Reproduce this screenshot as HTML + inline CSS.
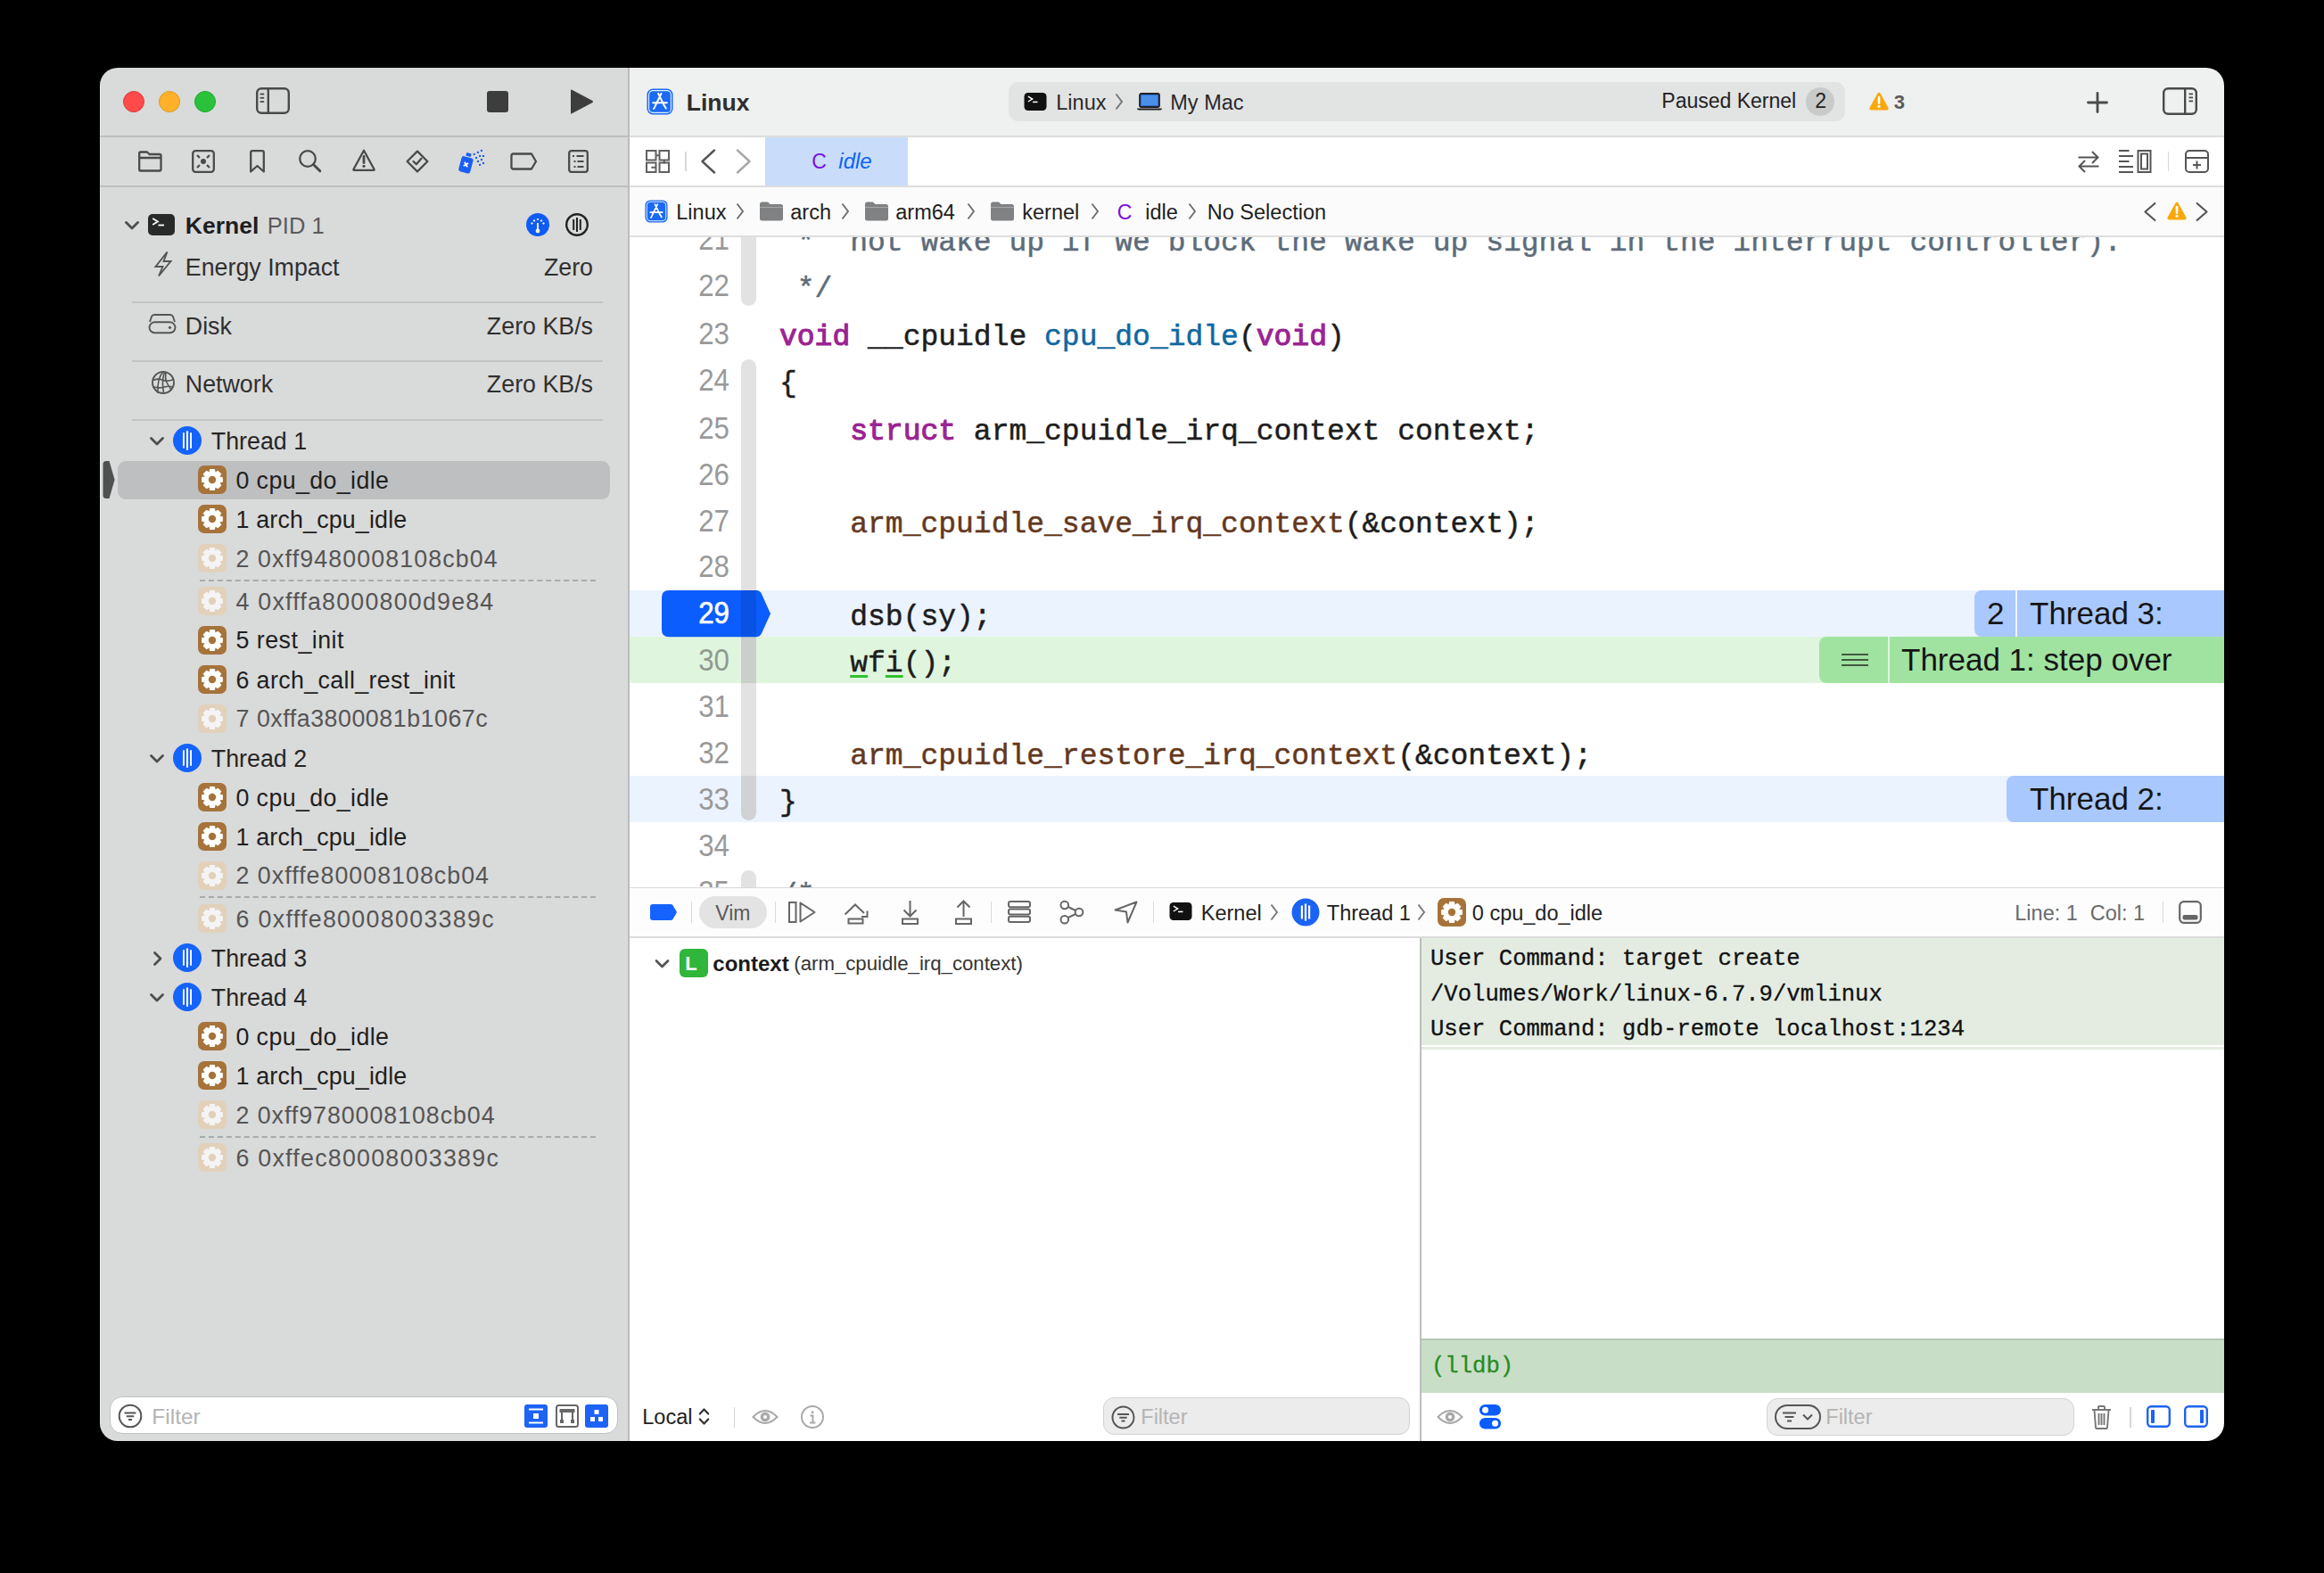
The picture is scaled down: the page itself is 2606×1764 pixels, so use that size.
<!DOCTYPE html>
<html><head><meta charset="utf-8">
<style>
html,body{margin:0;padding:0}
body{width:2606px;height:1764px;background:#000;position:relative;overflow:hidden;font-family:"Liberation Sans",sans-serif}
#win{position:absolute;left:0;top:0;width:2606px;height:1764px;clip-path:inset(76px 112px 148px 112px round 20px)}
.a{position:absolute}
.t{position:absolute;white-space:pre;line-height:44px;height:44px}
.m{font-family:"Liberation Mono",monospace}
svg{position:absolute;overflow:visible}
.code{position:absolute;left:874px;white-space:pre;font-family:"Liberation Mono",monospace;font-size:33px;line-height:52px;height:52px;color:#1d1d1d;-webkit-text-stroke:0.5px currentColor}
.ln{position:absolute;left:740px;width:78px;text-align:right;font-size:35.5px;line-height:52px;height:52px;color:#999999;transform:scaleX(0.88);transform-origin:100% 50%}
.kw{color:#9b2393;-webkit-text-stroke:1.1px #9b2393}
.fn{color:#643820}
.dc{color:#0f68a0}
.cm{color:#5d6c79}
.side{font-size:26.8px;color:#262626}
.fr{font-size:26.8px;color:#1f1f1f}
.fa{color:#555}
.bc{font-size:23px;color:#1f1f1f;line-height:44px;height:44px}
.chev{color:#7a7a7a}
</style></head><body>
<div id="win">
<!-- sidebar -->
<div class="a" style="left:112px;top:76px;width:592px;height:1540px;background:#d9dada"></div>
<div class="a" style="left:704px;top:76px;width:2px;height:1540px;background:#bcbcbc"></div>
<div class="a" style="left:112px;top:152px;width:592px;height:2px;background:#bdbebe"></div>
<div class="a" style="left:112px;top:208px;width:592px;height:2px;background:#bdbebe"></div>
<!-- editor title bar -->
<div class="a" style="left:706px;top:76px;width:1788px;height:76px;background:#eff0f0"></div>
<div class="a" style="left:706px;top:152px;width:1788px;height:2px;background:#dcdddd"></div>
<!-- tab bar -->
<div class="a" style="left:706px;top:154px;width:1788px;height:54px;background:#fff"></div>
<div class="a" style="left:858px;top:154px;width:160px;height:54px;background:#c9dcfa"></div>
<div class="a" style="left:706px;top:208px;width:1788px;height:2px;background:#dedede"></div>
<!-- breadcrumb -->
<div class="a" style="left:706px;top:210px;width:1788px;height:54px;background:#fbfbfb"></div>
<div class="a" style="left:706px;top:264px;width:1788px;height:2px;background:#dedede"></div>
<!-- code area -->
<!-- debug bar -->
<div class="a" style="left:706px;top:994px;width:1788px;height:2px;background:#d9d9d9"></div>
<div class="a" style="left:706px;top:996px;width:1788px;height:54px;background:#fdfdfd"></div>
<div class="a" style="left:706px;top:1050px;width:1788px;height:2px;background:#dcdcdc"></div>
<!-- variables -->
<div class="a" style="left:706px;top:1052px;width:886px;height:564px;background:#fff"></div>
<!-- console -->
<div class="a" style="left:1592px;top:1052px;width:2px;height:564px;background:#bdbdbd"></div>
<div class="a" style="left:1594px;top:1052px;width:900px;height:564px;background:#fff"></div>
<div class="a" style="left:1594px;top:1052px;width:900px;height:120px;background:#e4ece2"></div>
<div class="a" style="left:1594px;top:1174px;width:900px;height:3px;background:#e4ece2"></div>
<div class="a" style="left:1594px;top:1501px;width:900px;height:2px;background:#b3c9b1"></div>
<div class="a" style="left:1594px;top:1503px;width:900px;height:59px;background:#c8dec6"></div>
<div class="a" style="left:706px;top:266px;width:1788px;height:729px;overflow:hidden;background:#fff">
<div class="a" style="left:0;top:395.9px;width:1788px;height:52.0px;background:#ebf3fe"></div>
<div class="a" style="left:0;top:447.9px;width:1788px;height:52.0px;background:#e0f5de"></div>
<div class="a" style="left:0;top:603.9px;width:1788px;height:52.0px;background:#ebf3fe"></div>
<div class="a" style="left:1508px;top:395.9px;width:46px;height:52.0px;background:#a9c8fd;border-radius:8px 0 0 8px"></div>
<div class="a" style="left:1556px;top:395.9px;width:300px;height:52.0px;background:#a9c8fd"></div>
<div class="a" style="left:1334px;top:447.9px;width:77px;height:52.0px;background:#a0e3a0;border-radius:8px 0 0 8px"></div>
<div class="a" style="left:1413px;top:447.9px;width:400px;height:52.0px;background:#a0e3a0"></div>
<div class="a" style="left:1544px;top:603.9px;width:300px;height:52.0px;background:#a9c8fd;border-radius:8px 0 0 8px"></div>
<div class="t" style="left:1522px;top:395.9px;height:52px;line-height:52px;font-size:35px;color:#151515">2</div>
<div class="t" style="left:1570px;top:395.9px;height:52px;line-height:52px;font-size:35px;color:#151515">Thread 3:</div>
<div class="t" style="left:1426px;top:447.9px;height:52px;line-height:52px;font-size:35px;color:#151515">Thread 1: step over</div>
<div class="t" style="left:1570px;top:603.9px;height:52px;line-height:52px;font-size:35px;color:#151515">Thread 2:</div>
<div class="a" style="left:1359px;top:466.9px;width:30px;height:2.4px;background:#3f5a3f"></div>
<div class="a" style="left:1359px;top:472.9px;width:30px;height:2.4px;background:#3f5a3f"></div>
<div class="a" style="left:1359px;top:478.9px;width:30px;height:2.4px;background:#3f5a3f"></div>
<div class="a" style="left:124.5px;top:-66.0px;width:17.2px;height:143.0px;background:#e2e2e2;border-radius:8.5px"></div>
<div class="a" style="left:124.5px;top:136.7px;width:17.2px;height:517.8px;background:#e2e2e2;border-radius:8.5px"></div>
<div class="a" style="left:124.5px;top:709.7px;width:17.2px;height:124.3px;background:#e2e2e2;border-radius:8.5px"></div>
<svg style="left:36px;top:395.9px" width="122" height="52.3" viewBox="0 0 122 52.3"><path d="M8 0 H106 Q110 0 112 4 L122 26.15 L112 48.3 Q110 52.3 106 52.3 H8 Q0 52.3 0 44.3 V8 Q0 0 8 0 Z" fill="#0b5dfe"/></svg>
<div class="a" style="left:125px;top:395.9px;width:17px;height:52.0px;background:rgba(0,0,0,0.10)"></div>
<div class="a" style="left:125px;top:447.9px;width:17px;height:52.0px;background:rgba(0,40,0,0.10)"></div>
<div class="a" style="left:125px;top:603.9px;width:17px;height:50.5px;background:rgba(0,20,60,0.08);border-radius:0 0 8.5px 8.5px"></div>
<div class="ln" style="left:34px;top:-24.1px;color:#999999">21</div>
<div class="ln" style="left:34px;top:27.9px;color:#999999">22</div>
<div class="ln" style="left:34px;top:82.0px;color:#999999">23</div>
<div class="ln" style="left:34px;top:133.7px;color:#999999">24</div>
<div class="ln" style="left:34px;top:187.6px;color:#999999">25</div>
<div class="ln" style="left:34px;top:239.8px;color:#999999">26</div>
<div class="ln" style="left:34px;top:291.7px;color:#999999">27</div>
<div class="ln" style="left:34px;top:343.4px;color:#999999">28</div>
<div class="ln" style="left:34px;top:394.8px;color:#fff;-webkit-text-stroke:0.7px #fff">29</div>
<div class="ln" style="left:34px;top:447.8px;color:#8f9a8f">30</div>
<div class="ln" style="left:34px;top:499.8px;color:#999999">31</div>
<div class="ln" style="left:34px;top:551.8px;color:#999999">32</div>
<div class="ln" style="left:34px;top:603.8px;color:#999999">33</div>
<div class="ln" style="left:34px;top:655.8px;color:#999999">34</div>
<div class="ln" style="left:34px;top:707.8px;color:#999999">35</div>
<div class="code" style="left:168px;top:-19.0px"><span class="cm"> *  not wake up if we block the wake up signal in the interrupt controller).</span></div>
<div class="code" style="left:168px;top:33.0px"><span class="cm"> */</span></div>
<div class="code" style="left:168px;top:87.1px"><span class="kw">void</span> __cpuidle <span class="dc">cpu_do_idle</span>(<span class="kw">void</span>)</div>
<div class="code" style="left:168px;top:138.8px">{</div>
<div class="code" style="left:168px;top:192.7px">    <span class="kw">struct</span> arm_cpuidle_irq_context context;</div>
<div class="code" style="left:168px;top:296.8px">    <span class="fn">arm_cpuidle_save_irq_context</span>(&amp;context);</div>
<div class="code" style="left:168px;top:400.9px">    dsb(sy);</div>
<div class="code" style="left:168px;top:452.9px">    <span style="text-decoration:underline;text-decoration-color:#2fc22f;text-decoration-thickness:3px;text-underline-offset:4px">w</span>f<span style="text-decoration:underline;text-decoration-color:#2fc22f;text-decoration-thickness:3px;text-underline-offset:4px">i</span>();</div>
<div class="code" style="left:168px;top:556.9px">    <span class="fn">arm_cpuidle_restore_irq_context</span>(&amp;context);</div>
<div class="code" style="left:168px;top:608.9px">}</div>
<div class="code" style="left:168px;top:712.9px"><span class="cm">/*</span></div>
</div>
<div class="a" style="left:138px;top:102px;width:22.4px;height:22.4px;border-radius:50%;background:#ff4a4c;border:0.8px solid #dc3a3c"></div>
<div class="a" style="left:178px;top:102px;width:22.4px;height:22.4px;border-radius:50%;background:#ffb12a;border:0.8px solid #dc991c"></div>
<div class="a" style="left:218px;top:102px;width:22.4px;height:22.4px;border-radius:50%;background:#29c23a;border:0.8px solid #1ea82d"></div>
<svg style="left:287px;top:98px" width="38" height="30" viewBox="0 0 38 30"><rect x="1.2" y="1.2" width="35.6" height="27.6" rx="5" fill="none" stroke="#494949" stroke-width="2.4"/><rect x="12.6" y="1.2" width="2.4" height="27.6" fill="#494949"/><rect x="4.6" y="6.6" width="4.6" height="1.8" fill="#494949"/><rect x="4.6" y="10.9" width="4.6" height="1.8" fill="#494949"/><rect x="4.6" y="15.2" width="4.6" height="1.8" fill="#494949"/></svg>
<div class="a" style="left:546px;top:102px;width:24px;height:24px;border-radius:3px;background:#3d3d3d"></div>
<svg style="left:639px;top:100px" width="27" height="28" viewBox="0 0 27 28"><path d="M1 1.5 Q1 0 2.4 0.8 L25.5 13 Q26.6 14 25.5 15 L2.4 27.2 Q1 28 1 26.5 Z" fill="#3d3d3d"/></svg>
<svg style="left:155px;top:169px" width="27" height="24" viewBox="0 0 27 24"><path d="M2.5 22.5 H24 Q25.5 22.5 25.5 21 V5.5 Q25.5 4 24 4 H12.5 L10 1.5 H2.5 Q1.2 1.5 1.2 3 V21 Q1.2 22.5 2.5 22.5 Z M1.2 8 H25.5" fill="none" stroke="#4a4a4a" stroke-width="2.3" stroke-linejoin="round"/></svg>
<svg style="left:215px;top:168px" width="26" height="26" viewBox="0 0 26 26"><rect x="1.2" y="1.2" width="23.6" height="23.6" rx="3" fill="none" stroke="#4a4a4a" stroke-width="2.3"/><circle cx="13" cy="13" r="3" fill="#4a4a4a"/><path d="M6 6 L9 9 M20 6 L17 9 M6 20 L9 17 M20 20 L17 17" stroke="#4a4a4a" stroke-width="2.3"/></svg>
<svg style="left:279px;top:168px" width="19" height="26" viewBox="0 0 19 26"><path d="M2.2 24.5 V3 Q2.2 1.2 4 1.2 H15 Q16.8 1.2 16.8 3 V24.5 L9.5 18 Z" fill="none" stroke="#4a4a4a" stroke-width="2.3" stroke-linejoin="round"/></svg>
<svg style="left:334px;top:168px" width="27" height="26" viewBox="0 0 27 26"><circle cx="11" cy="10" r="8.8" fill="none" stroke="#4a4a4a" stroke-width="2.3"/><path d="M17.5 16.5 L24.8 23.8" stroke="#4a4a4a" stroke-width="3" stroke-linecap="round"/></svg>
<svg style="left:395px;top:167px" width="26" height="26" viewBox="0 0 26 26"><path d="M13 1.8 L24.5 22.8 Q25 23.8 24 23.8 H2 Q1 23.8 1.5 22.8 Z" fill="none" stroke="#4a4a4a" stroke-width="2.3" stroke-linejoin="round"/><path d="M13 8.5 V15.5" stroke="#4a4a4a" stroke-width="2.8" stroke-linecap="round"/><circle cx="13" cy="19.3" r="1.6" fill="#4a4a4a"/></svg>
<svg style="left:455px;top:168px" width="26" height="26" viewBox="0 0 26 26"><path d="M13 1.6 L24.4 13 L13 24.4 L1.6 13 Z" fill="none" stroke="#4a4a4a" stroke-width="2.3" stroke-linejoin="round"/><path d="M8.5 13 L11.8 16.2 L17.5 9.8" fill="none" stroke="#4a4a4a" stroke-width="2.3" stroke-linecap="round" stroke-linejoin="round"/></svg>
<svg style="left:513px;top:168px" width="34" height="28" viewBox="0 0 34 28"><g transform="rotate(15 9.5 16.5)"><rect x="2.8" y="8" width="13.4" height="17.6" rx="2.3" fill="#1a5ff5"/><rect x="6.8" y="3.3" width="5.6" height="3.6" fill="#1a5ff5"/><path d="M7.3 14.3 L11.7 18.7 M11.7 14.3 L7.3 18.7" stroke="#fff" stroke-width="1.8"/></g><rect x="17.7" y="3.9000000000000004" width="2.1" height="2.1" fill="#1a5ff5"/><rect x="21.9" y="1.85" width="2.1" height="2.1" fill="#1a5ff5"/><rect x="25.9" y="-0.09999999999999998" width="2.1" height="2.1" fill="#1a5ff5"/><rect x="20" y="8" width="2.1" height="2.1" fill="#1a5ff5"/><rect x="24.1" y="5.9" width="2.1" height="2.1" fill="#1a5ff5"/><rect x="28" y="5.9" width="2.1" height="2.1" fill="#1a5ff5"/><rect x="21.9" y="11.9" width="2.1" height="2.1" fill="#1a5ff5"/><rect x="25.9" y="10" width="2.1" height="2.1" fill="#1a5ff5"/><rect x="24.1" y="15.8" width="2.1" height="2.1" fill="#1a5ff5"/><rect x="28" y="13.9" width="2.1" height="2.1" fill="#1a5ff5"/></svg>
<svg style="left:572px;top:171px" width="31" height="20" viewBox="0 0 31 20"><path d="M3.5 1.5 H24 L29 10 L24 18.5 H3.5 Q1.5 18.5 1.5 16.5 V3.5 Q1.5 1.5 3.5 1.5 Z" fill="none" stroke="#4a4a4a" stroke-width="2.3" stroke-linejoin="round"/></svg>
<svg style="left:637px;top:168px" width="23" height="26" viewBox="0 0 23 26"><rect x="1.2" y="1.2" width="20.6" height="23.6" rx="2.5" fill="none" stroke="#4a4a4a" stroke-width="2.3"/><path d="M5 7 H7 M9.5 7 H17.5 M6.5 13 H8.5 M10.5 13 H17.5 M6.5 19 H8.5 M10.5 19 H17.5" stroke="#4a4a4a" stroke-width="2"/></svg>
<svg style="left:140.0px;top:247.5px" width="16" height="10" viewBox="0 0 16 10"><path d="M1.5 1.5 L8 8 L14.5 1.5" fill="none" stroke="#4d4d4d" stroke-width="2.8" stroke-linecap="round" stroke-linejoin="round"/></svg>
<svg style="left:166px;top:240px" width="30" height="24" viewBox="0 0 30 24"><rect width="30" height="24" rx="5" fill="#282a2a"/><path d="M5.2 5 L11 8.5 L5.2 12" fill="none" stroke="#fff" stroke-width="1.7" stroke-linejoin="miter"/><rect x="11.5" y="11.6" width="6.5" height="1.8" fill="#fff"/></svg>
<div class="t" style="left:207.8px;top:230.5px;font-size:26.5px;color:#1e1e1e;font-weight:bold;">Kernel</div>
<div class="t" style="left:299.8px;top:230.5px;font-size:25.5px;color:#5a5a5a;font-weight:normal;">PID 1</div>
<svg style="left:590px;top:239px" width="26" height="26" viewBox="0 0 26 26"><circle cx="13" cy="13" r="13" fill="#0f5cf4"/><rect x="12" y="11" width="2" height="9" fill="#f4ecd9"/><circle cx="13" cy="20" r="2.4" fill="#f4ecd9"/><rect x="12" y="6" width="2" height="2" fill="#f4ecd9"/><rect x="8" y="7.5" width="2" height="2" fill="#f4ecd9" transform="rotate(45 9 8.5)"/><rect x="16" y="7.5" width="2" height="2" fill="#f4ecd9" transform="rotate(45 17 8.5)"/><rect x="5.5" y="10.5" width="2" height="2" fill="#f4ecd9" transform="rotate(45 6.5 11.5)"/><rect x="18.5" y="10.5" width="2" height="2" fill="#f4ecd9" transform="rotate(45 19.5 11.5)"/></svg>
<svg style="left:634px;top:239px" width="26" height="26" viewBox="0 0 26 26"><circle cx="13" cy="13" r="11.8" fill="none" stroke="#222" stroke-width="2.4"/><rect x="8.2" y="7" width="2" height="12" fill="#222"/><rect x="12" y="5" width="2" height="16" fill="#222"/><rect x="15.8" y="7" width="2" height="12" fill="#222"/></svg>
<svg style="left:173px;top:281px" width="20" height="30" viewBox="0 0 20 30"><path d="M14.5 1.5 L1.5 18 H9.5 L5 28.5 L18.5 12 H10.5 Z" fill="none" stroke="#555" stroke-width="1.9" stroke-linejoin="miter"/></svg>
<div class="t" style="left:207.8px;top:277.5px;font-size:26.8px;color:#303030;font-weight:normal;">Energy Impact</div>
<div class="t" style="left:65px;width:600px;text-align:right;top:277.5px;font-size:26.8px;color:#303030;font-weight:normal;">Zero</div>
<div class="a" style="left:148px;top:338px;width:528px;height:2px;background:#c2c3c3"></div>
<div class="a" style="left:148px;top:404px;width:528px;height:2px;background:#c2c3c3"></div>
<div class="a" style="left:148px;top:470px;width:528px;height:2px;background:#c2c3c3"></div>
<svg style="left:166px;top:351px" width="32" height="24" viewBox="0 0 32 24"><path d="M7 2 H25 Q27 2 28 4 L30 10 M2 10 L4 4 Q5 2 7 2" fill="none" stroke="#555" stroke-width="1.9"/><rect x="1.5" y="10.3" width="29" height="12" rx="6" fill="none" stroke="#555" stroke-width="1.9"/><circle cx="24.5" cy="16.3" r="1.6" fill="#555"/></svg>
<div class="t" style="left:207.8px;top:343.5px;font-size:26.8px;color:#303030;font-weight:normal;">Disk</div>
<div class="t" style="left:65px;width:600px;text-align:right;top:343.5px;font-size:26.8px;color:#303030;font-weight:normal;">Zero KB/s</div>
<svg style="left:170px;top:416px" width="26" height="26" viewBox="0 0 26 26"><circle cx="13" cy="13" r="12" fill="none" stroke="#555" stroke-width="1.9"/><path d="M13 1 Q6 8 7 25 M14.5 1.2 Q11 10 13.5 25 M16 1.5 Q15 8 16.5 12 M2 10.5 Q7 8 12 10 Q17 12.5 24.5 9.5 M1.5 17.5 Q8 20 14 18 Q19 16.5 24 18 M16.5 12 Q19 17 22 21" fill="none" stroke="#555" stroke-width="1.6"/></svg>
<div class="t" style="left:207.8px;top:409.0px;font-size:26.8px;color:#303030;font-weight:normal;">Network</div>
<div class="t" style="left:65px;width:600px;text-align:right;top:409.0px;font-size:26.8px;color:#303030;font-weight:normal;">Zero KB/s</div>
<div class="a" style="left:132px;top:516.5px;width:552px;height:43px;border-radius:9px;background:#bebfc1"></div>
<svg style="left:114.5px;top:517px" width="14" height="42" viewBox="0 0 14 42"><path d="M4 0 H7.5 L13.6 21 L7.5 42 H4 Q0.5 42 0.5 38.5 V3.5 Q0.5 0 4 0 Z" fill="#4f5151"/></svg>
<svg style="left:168.0px;top:490.0px" width="16" height="10" viewBox="0 0 16 10"><path d="M1.5 1.5 L8 8 L14.5 1.5" fill="none" stroke="#4d4d4d" stroke-width="2.8" stroke-linecap="round" stroke-linejoin="round"/></svg>
<svg style="left:194px;top:477.5px" width="32" height="32" viewBox="0 0 32 32"><circle cx="16" cy="16" r="16" fill="#1463fb"/><rect x="11" y="7.1" width="1.9" height="17.9" rx="0.9" fill="#fff"/><rect x="14.95" y="5.2" width="2.1" height="21.7" rx="1" fill="#fff"/><rect x="19.1" y="7.1" width="1.9" height="17.9" rx="0.9" fill="#fff"/></svg>
<div class="t" style="left:236.8px;top:473.0px;font-size:26.8px;color:#262626;font-weight:normal;">Thread 1</div>
<svg style="left:222px;top:522.2px" width="32" height="32" viewBox="0 0 32 32"><rect x="0" y="0" width="32" height="32" rx="7" fill="#a6733a"/><path d="M12.40 7.75 L13.22 4.12 L18.78 4.12 L19.60 7.75 L19.29 7.62 L22.44 5.64 L26.36 9.56 L24.38 12.71 L24.25 12.40 L27.88 13.22 L27.88 18.78 L24.25 19.60 L24.38 19.29 L26.36 22.44 L22.44 26.36 L19.29 24.38 L19.60 24.25 L18.78 27.88 L13.22 27.88 L12.40 24.25 L12.71 24.38 L9.56 26.36 L5.64 22.44 L7.62 19.29 L7.75 19.60 L4.12 18.78 L4.12 13.22 L7.75 12.40 L7.62 12.71 L5.64 9.56 L9.56 5.64 L12.71 7.62 Z M20.20 16.00 A4.2 4.2 0 1 0 11.80 16.00 A4.2 4.2 0 1 0 20.20 16.00 Z" fill="#ffffff" fill-rule="evenodd"/></svg>
<div class="t" style="left:264.5px;top:516.9px;font-size:26.8px;color:#1f1f1f;font-weight:normal;letter-spacing:0.383px">0 cpu_do_idle</div>
<svg style="left:222px;top:566.1px" width="32" height="32" viewBox="0 0 32 32"><rect x="0" y="0" width="32" height="32" rx="7" fill="#a6733a"/><path d="M12.40 7.75 L13.22 4.12 L18.78 4.12 L19.60 7.75 L19.29 7.62 L22.44 5.64 L26.36 9.56 L24.38 12.71 L24.25 12.40 L27.88 13.22 L27.88 18.78 L24.25 19.60 L24.38 19.29 L26.36 22.44 L22.44 26.36 L19.29 24.38 L19.60 24.25 L18.78 27.88 L13.22 27.88 L12.40 24.25 L12.71 24.38 L9.56 26.36 L5.64 22.44 L7.62 19.29 L7.75 19.60 L4.12 18.78 L4.12 13.22 L7.75 12.40 L7.62 12.71 L5.64 9.56 L9.56 5.64 L12.71 7.62 Z M20.20 16.00 A4.2 4.2 0 1 0 11.80 16.00 A4.2 4.2 0 1 0 20.20 16.00 Z" fill="#ffffff" fill-rule="evenodd"/></svg>
<div class="t" style="left:264.5px;top:560.8px;font-size:26.8px;color:#1f1f1f;font-weight:normal;letter-spacing:0.179px">1 arch_cpu_idle</div>
<svg style="left:222px;top:610.0px" width="32" height="32" viewBox="0 0 32 32"><rect x="0" y="0" width="32" height="32" rx="7" fill="#e2d1ba"/><path d="M12.40 7.75 L13.22 4.12 L18.78 4.12 L19.60 7.75 L19.29 7.62 L22.44 5.64 L26.36 9.56 L24.38 12.71 L24.25 12.40 L27.88 13.22 L27.88 18.78 L24.25 19.60 L24.38 19.29 L26.36 22.44 L22.44 26.36 L19.29 24.38 L19.60 24.25 L18.78 27.88 L13.22 27.88 L12.40 24.25 L12.71 24.38 L9.56 26.36 L5.64 22.44 L7.62 19.29 L7.75 19.60 L4.12 18.78 L4.12 13.22 L7.75 12.40 L7.62 12.71 L5.64 9.56 L9.56 5.64 L12.71 7.62 Z M20.20 16.00 A4.2 4.2 0 1 0 11.80 16.00 A4.2 4.2 0 1 0 20.20 16.00 Z" fill="#f4f4f4" fill-rule="evenodd"/></svg>
<div class="t" style="left:264.5px;top:604.7px;font-size:26.8px;color:#555555;font-weight:normal;letter-spacing:1.105px">2 0xff9480008108cb04</div>
<div class="a" style="left:223.5px;top:649.7px;width:444px;height:0;border-top:2px dashed #a9aaaa"></div>
<svg style="left:222px;top:657.8px" width="32" height="32" viewBox="0 0 32 32"><rect x="0" y="0" width="32" height="32" rx="7" fill="#e2d1ba"/><path d="M12.40 7.75 L13.22 4.12 L18.78 4.12 L19.60 7.75 L19.29 7.62 L22.44 5.64 L26.36 9.56 L24.38 12.71 L24.25 12.40 L27.88 13.22 L27.88 18.78 L24.25 19.60 L24.38 19.29 L26.36 22.44 L22.44 26.36 L19.29 24.38 L19.60 24.25 L18.78 27.88 L13.22 27.88 L12.40 24.25 L12.71 24.38 L9.56 26.36 L5.64 22.44 L7.62 19.29 L7.75 19.60 L4.12 18.78 L4.12 13.22 L7.75 12.40 L7.62 12.71 L5.64 9.56 L9.56 5.64 L12.71 7.62 Z M20.20 16.00 A4.2 4.2 0 1 0 11.80 16.00 A4.2 4.2 0 1 0 20.20 16.00 Z" fill="#f4f4f4" fill-rule="evenodd"/></svg>
<div class="t" style="left:264.5px;top:652.5px;font-size:26.8px;color:#555555;font-weight:normal;letter-spacing:1.211px">4 0xfffa8000800d9e84</div>
<svg style="left:222px;top:701.7px" width="32" height="32" viewBox="0 0 32 32"><rect x="0" y="0" width="32" height="32" rx="7" fill="#a6733a"/><path d="M12.40 7.75 L13.22 4.12 L18.78 4.12 L19.60 7.75 L19.29 7.62 L22.44 5.64 L26.36 9.56 L24.38 12.71 L24.25 12.40 L27.88 13.22 L27.88 18.78 L24.25 19.60 L24.38 19.29 L26.36 22.44 L22.44 26.36 L19.29 24.38 L19.60 24.25 L18.78 27.88 L13.22 27.88 L12.40 24.25 L12.71 24.38 L9.56 26.36 L5.64 22.44 L7.62 19.29 L7.75 19.60 L4.12 18.78 L4.12 13.22 L7.75 12.40 L7.62 12.71 L5.64 9.56 L9.56 5.64 L12.71 7.62 Z M20.20 16.00 A4.2 4.2 0 1 0 11.80 16.00 A4.2 4.2 0 1 0 20.20 16.00 Z" fill="#ffffff" fill-rule="evenodd"/></svg>
<div class="t" style="left:264.5px;top:696.4px;font-size:26.8px;color:#1f1f1f;font-weight:normal;letter-spacing:0.48px">5 rest_init</div>
<svg style="left:222px;top:746.1px" width="32" height="32" viewBox="0 0 32 32"><rect x="0" y="0" width="32" height="32" rx="7" fill="#a6733a"/><path d="M12.40 7.75 L13.22 4.12 L18.78 4.12 L19.60 7.75 L19.29 7.62 L22.44 5.64 L26.36 9.56 L24.38 12.71 L24.25 12.40 L27.88 13.22 L27.88 18.78 L24.25 19.60 L24.38 19.29 L26.36 22.44 L22.44 26.36 L19.29 24.38 L19.60 24.25 L18.78 27.88 L13.22 27.88 L12.40 24.25 L12.71 24.38 L9.56 26.36 L5.64 22.44 L7.62 19.29 L7.75 19.60 L4.12 18.78 L4.12 13.22 L7.75 12.40 L7.62 12.71 L5.64 9.56 L9.56 5.64 L12.71 7.62 Z M20.20 16.00 A4.2 4.2 0 1 0 11.80 16.00 A4.2 4.2 0 1 0 20.20 16.00 Z" fill="#ffffff" fill-rule="evenodd"/></svg>
<div class="t" style="left:264.5px;top:740.8px;font-size:26.8px;color:#1f1f1f;font-weight:normal;letter-spacing:0.375px">6 arch_call_rest_init</div>
<svg style="left:222px;top:789.5px" width="32" height="32" viewBox="0 0 32 32"><rect x="0" y="0" width="32" height="32" rx="7" fill="#e2d1ba"/><path d="M12.40 7.75 L13.22 4.12 L18.78 4.12 L19.60 7.75 L19.29 7.62 L22.44 5.64 L26.36 9.56 L24.38 12.71 L24.25 12.40 L27.88 13.22 L27.88 18.78 L24.25 19.60 L24.38 19.29 L26.36 22.44 L22.44 26.36 L19.29 24.38 L19.60 24.25 L18.78 27.88 L13.22 27.88 L12.40 24.25 L12.71 24.38 L9.56 26.36 L5.64 22.44 L7.62 19.29 L7.75 19.60 L4.12 18.78 L4.12 13.22 L7.75 12.40 L7.62 12.71 L5.64 9.56 L9.56 5.64 L12.71 7.62 Z M20.20 16.00 A4.2 4.2 0 1 0 11.80 16.00 A4.2 4.2 0 1 0 20.20 16.00 Z" fill="#f4f4f4" fill-rule="evenodd"/></svg>
<div class="t" style="left:264.5px;top:784.2px;font-size:26.8px;color:#555555;font-weight:normal;letter-spacing:0.526px">7 0xffa3800081b1067c</div>
<svg style="left:168.0px;top:846.1px" width="16" height="10" viewBox="0 0 16 10"><path d="M1.5 1.5 L8 8 L14.5 1.5" fill="none" stroke="#4d4d4d" stroke-width="2.8" stroke-linecap="round" stroke-linejoin="round"/></svg>
<svg style="left:194px;top:833.6px" width="32" height="32" viewBox="0 0 32 32"><circle cx="16" cy="16" r="16" fill="#1463fb"/><rect x="11" y="7.1" width="1.9" height="17.9" rx="0.9" fill="#fff"/><rect x="14.95" y="5.2" width="2.1" height="21.7" rx="1" fill="#fff"/><rect x="19.1" y="7.1" width="1.9" height="17.9" rx="0.9" fill="#fff"/></svg>
<div class="t" style="left:236.8px;top:829.1px;font-size:26.8px;color:#262626;font-weight:normal;">Thread 2</div>
<svg style="left:222px;top:878.3px" width="32" height="32" viewBox="0 0 32 32"><rect x="0" y="0" width="32" height="32" rx="7" fill="#a6733a"/><path d="M12.40 7.75 L13.22 4.12 L18.78 4.12 L19.60 7.75 L19.29 7.62 L22.44 5.64 L26.36 9.56 L24.38 12.71 L24.25 12.40 L27.88 13.22 L27.88 18.78 L24.25 19.60 L24.38 19.29 L26.36 22.44 L22.44 26.36 L19.29 24.38 L19.60 24.25 L18.78 27.88 L13.22 27.88 L12.40 24.25 L12.71 24.38 L9.56 26.36 L5.64 22.44 L7.62 19.29 L7.75 19.60 L4.12 18.78 L4.12 13.22 L7.75 12.40 L7.62 12.71 L5.64 9.56 L9.56 5.64 L12.71 7.62 Z M20.20 16.00 A4.2 4.2 0 1 0 11.80 16.00 A4.2 4.2 0 1 0 20.20 16.00 Z" fill="#ffffff" fill-rule="evenodd"/></svg>
<div class="t" style="left:264.5px;top:873.0px;font-size:26.8px;color:#1f1f1f;font-weight:normal;letter-spacing:0.383px">0 cpu_do_idle</div>
<svg style="left:222px;top:921.8px" width="32" height="32" viewBox="0 0 32 32"><rect x="0" y="0" width="32" height="32" rx="7" fill="#a6733a"/><path d="M12.40 7.75 L13.22 4.12 L18.78 4.12 L19.60 7.75 L19.29 7.62 L22.44 5.64 L26.36 9.56 L24.38 12.71 L24.25 12.40 L27.88 13.22 L27.88 18.78 L24.25 19.60 L24.38 19.29 L26.36 22.44 L22.44 26.36 L19.29 24.38 L19.60 24.25 L18.78 27.88 L13.22 27.88 L12.40 24.25 L12.71 24.38 L9.56 26.36 L5.64 22.44 L7.62 19.29 L7.75 19.60 L4.12 18.78 L4.12 13.22 L7.75 12.40 L7.62 12.71 L5.64 9.56 L9.56 5.64 L12.71 7.62 Z M20.20 16.00 A4.2 4.2 0 1 0 11.80 16.00 A4.2 4.2 0 1 0 20.20 16.00 Z" fill="#ffffff" fill-rule="evenodd"/></svg>
<div class="t" style="left:264.5px;top:916.5px;font-size:26.8px;color:#1f1f1f;font-weight:normal;letter-spacing:0.179px">1 arch_cpu_idle</div>
<svg style="left:222px;top:965.7px" width="32" height="32" viewBox="0 0 32 32"><rect x="0" y="0" width="32" height="32" rx="7" fill="#e2d1ba"/><path d="M12.40 7.75 L13.22 4.12 L18.78 4.12 L19.60 7.75 L19.29 7.62 L22.44 5.64 L26.36 9.56 L24.38 12.71 L24.25 12.40 L27.88 13.22 L27.88 18.78 L24.25 19.60 L24.38 19.29 L26.36 22.44 L22.44 26.36 L19.29 24.38 L19.60 24.25 L18.78 27.88 L13.22 27.88 L12.40 24.25 L12.71 24.38 L9.56 26.36 L5.64 22.44 L7.62 19.29 L7.75 19.60 L4.12 18.78 L4.12 13.22 L7.75 12.40 L7.62 12.71 L5.64 9.56 L9.56 5.64 L12.71 7.62 Z M20.20 16.00 A4.2 4.2 0 1 0 11.80 16.00 A4.2 4.2 0 1 0 20.20 16.00 Z" fill="#f4f4f4" fill-rule="evenodd"/></svg>
<div class="t" style="left:264.5px;top:960.4px;font-size:26.8px;color:#555555;font-weight:normal;letter-spacing:1.011px">2 0xfffe80008108cb04</div>
<div class="a" style="left:223.5px;top:1005.4px;width:444px;height:0;border-top:2px dashed #a9aaaa"></div>
<svg style="left:222px;top:1014.0px" width="32" height="32" viewBox="0 0 32 32"><rect x="0" y="0" width="32" height="32" rx="7" fill="#e2d1ba"/><path d="M12.40 7.75 L13.22 4.12 L18.78 4.12 L19.60 7.75 L19.29 7.62 L22.44 5.64 L26.36 9.56 L24.38 12.71 L24.25 12.40 L27.88 13.22 L27.88 18.78 L24.25 19.60 L24.38 19.29 L26.36 22.44 L22.44 26.36 L19.29 24.38 L19.60 24.25 L18.78 27.88 L13.22 27.88 L12.40 24.25 L12.71 24.38 L9.56 26.36 L5.64 22.44 L7.62 19.29 L7.75 19.60 L4.12 18.78 L4.12 13.22 L7.75 12.40 L7.62 12.71 L5.64 9.56 L9.56 5.64 L12.71 7.62 Z M20.20 16.00 A4.2 4.2 0 1 0 11.80 16.00 A4.2 4.2 0 1 0 20.20 16.00 Z" fill="#f4f4f4" fill-rule="evenodd"/></svg>
<div class="t" style="left:264.5px;top:1008.7px;font-size:26.8px;color:#555555;font-weight:normal;letter-spacing:1.311px">6 0xfffe80008003389c</div>
<svg style="left:172px;top:1066.7px" width="10" height="16" viewBox="0 0 10 16"><path d="M1.5 1.5 L8 8 L1.5 14.5" fill="none" stroke="#4d4d4d" stroke-width="2.8" stroke-linecap="round" stroke-linejoin="round"/></svg>
<svg style="left:194px;top:1057.7px" width="32" height="32" viewBox="0 0 32 32"><circle cx="16" cy="16" r="16" fill="#1463fb"/><rect x="11" y="7.1" width="1.9" height="17.9" rx="0.9" fill="#fff"/><rect x="14.95" y="5.2" width="2.1" height="21.7" rx="1" fill="#fff"/><rect x="19.1" y="7.1" width="1.9" height="17.9" rx="0.9" fill="#fff"/></svg>
<div class="t" style="left:236.8px;top:1053.2px;font-size:26.8px;color:#262626;font-weight:normal;">Thread 3</div>
<svg style="left:168.0px;top:1114.0px" width="16" height="10" viewBox="0 0 16 10"><path d="M1.5 1.5 L8 8 L14.5 1.5" fill="none" stroke="#4d4d4d" stroke-width="2.8" stroke-linecap="round" stroke-linejoin="round"/></svg>
<svg style="left:194px;top:1101.5px" width="32" height="32" viewBox="0 0 32 32"><circle cx="16" cy="16" r="16" fill="#1463fb"/><rect x="11" y="7.1" width="1.9" height="17.9" rx="0.9" fill="#fff"/><rect x="14.95" y="5.2" width="2.1" height="21.7" rx="1" fill="#fff"/><rect x="19.1" y="7.1" width="1.9" height="17.9" rx="0.9" fill="#fff"/></svg>
<div class="t" style="left:236.8px;top:1097.0px;font-size:26.8px;color:#262626;font-weight:normal;">Thread 4</div>
<svg style="left:222px;top:1145.8px" width="32" height="32" viewBox="0 0 32 32"><rect x="0" y="0" width="32" height="32" rx="7" fill="#a6733a"/><path d="M12.40 7.75 L13.22 4.12 L18.78 4.12 L19.60 7.75 L19.29 7.62 L22.44 5.64 L26.36 9.56 L24.38 12.71 L24.25 12.40 L27.88 13.22 L27.88 18.78 L24.25 19.60 L24.38 19.29 L26.36 22.44 L22.44 26.36 L19.29 24.38 L19.60 24.25 L18.78 27.88 L13.22 27.88 L12.40 24.25 L12.71 24.38 L9.56 26.36 L5.64 22.44 L7.62 19.29 L7.75 19.60 L4.12 18.78 L4.12 13.22 L7.75 12.40 L7.62 12.71 L5.64 9.56 L9.56 5.64 L12.71 7.62 Z M20.20 16.00 A4.2 4.2 0 1 0 11.80 16.00 A4.2 4.2 0 1 0 20.20 16.00 Z" fill="#ffffff" fill-rule="evenodd"/></svg>
<div class="t" style="left:264.5px;top:1140.5px;font-size:26.8px;color:#1f1f1f;font-weight:normal;letter-spacing:0.383px">0 cpu_do_idle</div>
<svg style="left:222px;top:1190.3px" width="32" height="32" viewBox="0 0 32 32"><rect x="0" y="0" width="32" height="32" rx="7" fill="#a6733a"/><path d="M12.40 7.75 L13.22 4.12 L18.78 4.12 L19.60 7.75 L19.29 7.62 L22.44 5.64 L26.36 9.56 L24.38 12.71 L24.25 12.40 L27.88 13.22 L27.88 18.78 L24.25 19.60 L24.38 19.29 L26.36 22.44 L22.44 26.36 L19.29 24.38 L19.60 24.25 L18.78 27.88 L13.22 27.88 L12.40 24.25 L12.71 24.38 L9.56 26.36 L5.64 22.44 L7.62 19.29 L7.75 19.60 L4.12 18.78 L4.12 13.22 L7.75 12.40 L7.62 12.71 L5.64 9.56 L9.56 5.64 L12.71 7.62 Z M20.20 16.00 A4.2 4.2 0 1 0 11.80 16.00 A4.2 4.2 0 1 0 20.20 16.00 Z" fill="#ffffff" fill-rule="evenodd"/></svg>
<div class="t" style="left:264.5px;top:1185.0px;font-size:26.8px;color:#1f1f1f;font-weight:normal;letter-spacing:0.179px">1 arch_cpu_idle</div>
<svg style="left:222px;top:1233.8px" width="32" height="32" viewBox="0 0 32 32"><rect x="0" y="0" width="32" height="32" rx="7" fill="#e2d1ba"/><path d="M12.40 7.75 L13.22 4.12 L18.78 4.12 L19.60 7.75 L19.29 7.62 L22.44 5.64 L26.36 9.56 L24.38 12.71 L24.25 12.40 L27.88 13.22 L27.88 18.78 L24.25 19.60 L24.38 19.29 L26.36 22.44 L22.44 26.36 L19.29 24.38 L19.60 24.25 L18.78 27.88 L13.22 27.88 L12.40 24.25 L12.71 24.38 L9.56 26.36 L5.64 22.44 L7.62 19.29 L7.75 19.60 L4.12 18.78 L4.12 13.22 L7.75 12.40 L7.62 12.71 L5.64 9.56 L9.56 5.64 L12.71 7.62 Z M20.20 16.00 A4.2 4.2 0 1 0 11.80 16.00 A4.2 4.2 0 1 0 20.20 16.00 Z" fill="#f4f4f4" fill-rule="evenodd"/></svg>
<div class="t" style="left:264.5px;top:1228.5px;font-size:26.8px;color:#555555;font-weight:normal;letter-spacing:0.942px">2 0xff9780008108cb04</div>
<div class="a" style="left:223.5px;top:1274px;width:444px;height:0;border-top:2px dashed #a9aaaa"></div>
<svg style="left:222px;top:1281.8px" width="32" height="32" viewBox="0 0 32 32"><rect x="0" y="0" width="32" height="32" rx="7" fill="#e2d1ba"/><path d="M12.40 7.75 L13.22 4.12 L18.78 4.12 L19.60 7.75 L19.29 7.62 L22.44 5.64 L26.36 9.56 L24.38 12.71 L24.25 12.40 L27.88 13.22 L27.88 18.78 L24.25 19.60 L24.38 19.29 L26.36 22.44 L22.44 26.36 L19.29 24.38 L19.60 24.25 L18.78 27.88 L13.22 27.88 L12.40 24.25 L12.71 24.38 L9.56 26.36 L5.64 22.44 L7.62 19.29 L7.75 19.60 L4.12 18.78 L4.12 13.22 L7.75 12.40 L7.62 12.71 L5.64 9.56 L9.56 5.64 L12.71 7.62 Z M20.20 16.00 A4.2 4.2 0 1 0 11.80 16.00 A4.2 4.2 0 1 0 20.20 16.00 Z" fill="#f4f4f4" fill-rule="evenodd"/></svg>
<div class="t" style="left:264.5px;top:1276.5px;font-size:26.8px;color:#555555;font-weight:normal;letter-spacing:1.242px">6 0xffec80008003389c</div>
<div class="a" style="left:122.5px;top:1566px;width:568px;height:40px;border-radius:14px;background:#fff;border:1.5px solid #c2c2c2"></div>
<svg style="left:132px;top:1574px" width="28" height="28" viewBox="0 0 28 28"><circle cx="14" cy="14" r="12.3" fill="none" stroke="#555" stroke-width="2"/><path d="M7.5 10.5 H20.5 M9.8 14.3 H18.2 M12 18 H16" stroke="#555" stroke-width="2"/></svg>
<div class="t" style="left:170.3px;top:1566.5px;font-size:24.5px;color:#b4b4b4;font-weight:normal;">Filter</div>
<svg style="left:588px;top:1575px" width="26" height="26" viewBox="0 0 26 26"><rect width="26" height="26" rx="3" fill="#1d63f5"/><path d="M5 5.5 H21 M5 20.5 H21" stroke="#fff" stroke-width="2"/><rect x="10" y="10" width="6" height="6" fill="#fff"/></svg>
<svg style="left:622.5px;top:1575px" width="26" height="26" viewBox="0 0 26 26"><rect x="1" y="1" width="24" height="24" rx="2.5" fill="none" stroke="#666" stroke-width="2"/><rect x="4.5" y="5" width="17" height="4" fill="#666"/><path d="M7 9 V18 M19 9 V18" stroke="#666" stroke-width="2"/><rect x="5" y="17" width="4" height="4" fill="#666"/><rect x="17" y="17" width="4" height="4" fill="#666"/></svg>
<svg style="left:656px;top:1575px" width="26" height="26" viewBox="0 0 26 26"><rect width="26" height="26" rx="3" fill="#1d63f5"/><rect x="10.5" y="6" width="5" height="5" fill="#fff"/><rect x="6" y="14" width="5" height="5" fill="#fff"/><rect x="15" y="14" width="5" height="5" fill="#fff"/></svg>
<div class="a" style="left:112px;top:76px;width:1px;height:1540px;background:rgba(255,255,255,0.35)"></div>
<svg style="left:725px;top:99px" width="30" height="30" viewBox="0 0 30 30"><rect x="0.5" y="0.5" width="29" height="29" rx="6.5" fill="#1b6af6"/><rect x="2.6" y="2.6" width="24.8" height="24.8" rx="4.5" fill="none" stroke="#fff" stroke-width="1.1" opacity="0.9"/><path d="M13.2 6 L19.8 19.5 M16.5 6 L9.6 20 M7.2 16.2 H22.8 M9 21.5 L8 23 M20.5 20.2 L21.8 22.5" stroke="#fff" stroke-width="2" stroke-linecap="round"/></svg>
<div class="t" style="left:769.8px;top:93.0px;font-size:26.5px;color:#2e2e2e;font-weight:bold;">Linux</div>
<div class="a" style="left:1131px;top:92px;width:938px;height:44px;border-radius:11px;background:#e2e3e3"></div>
<svg style="left:1148px;top:104px" width="26" height="20" viewBox="0 0 30 24"><rect width="30" height="24" rx="5" fill="#111"/><path d="M5.2 5 L11 8.5 L5.2 12" fill="none" stroke="#fff" stroke-width="1.7" stroke-linejoin="miter"/><rect x="11.5" y="11.6" width="6.5" height="1.8" fill="#fff"/></svg>
<div class="t" style="left:1184.3px;top:92.5px;font-size:23.5px;color:#2a2a2a;font-weight:normal;">Linux</div>
<svg style="left:1250px;top:104px" width="10" height="20" viewBox="0 0 10 20"><path d="M1.5 1.5 L8 10 L1.5 18.5" fill="none" stroke="#777" stroke-width="2"/></svg>
<svg style="left:1274px;top:103px" width="30" height="22" viewBox="0 0 30 22"><rect x="4" y="2" width="22" height="15" rx="1.8" fill="#2b6fd6" stroke="#222" stroke-width="1.8"/><rect x="6" y="4" width="18" height="11" fill="#4a90e8"/><path d="M1 18.5 H29 Q29 20.5 27 20.5 H3 Q1 20.5 1 18.5 Z" fill="#222"/></svg>
<div class="t" style="left:1312.3px;top:92.5px;font-size:23.5px;color:#2a2a2a;font-weight:normal;">My Mac</div>
<div class="t" style="left:1863.3px;top:91.3px;font-size:23px;color:#222;font-weight:normal;">Paused Kernel</div>
<div class="a" style="left:2025.4px;top:98px;width:31.6px;height:31.6px;border-radius:50%;background:#c9caca"></div>
<div class="t" style="left:2035.3px;top:91.3px;font-size:23px;color:#222;font-weight:normal;">2</div>
<svg style="left:2096px;top:103px" width="22" height="21" viewBox="0 0 22 21"><path d="M11 0.8 Q12 0.8 12.6 1.8 L21.4 17.8 Q22.2 20.5 19.5 20.5 H2.5 Q-0.2 20.5 0.6 17.8 L9.4 1.8 Q10 0.8 11 0.8 Z" fill="#f9a80b"/><path d="M11 6 V12.8" stroke="#fff" stroke-width="2.6" stroke-linecap="round"/><circle cx="11" cy="16.3" r="1.5" fill="#fff"/></svg>
<div class="t" style="left:2123.8px;top:92.5px;font-size:22px;color:#5a5a5a;font-weight:bold;">3</div>
<svg style="left:2340px;top:102.5px" width="24" height="24" viewBox="0 0 24 24"><path d="M12 1.5 V22.5 M1.5 12 H22.5" stroke="#4a4a4a" stroke-width="2.8" stroke-linecap="round"/></svg>
<svg style="left:2425px;top:97.5px" width="39" height="31" viewBox="0 0 39 31"><rect x="1.2" y="1.2" width="36.6" height="28.6" rx="5" fill="none" stroke="#494949" stroke-width="2.4"/><rect x="24" y="1.2" width="2.4" height="28.6" fill="#494949"/><rect x="29.5" y="6.5" width="4.5" height="1.8" fill="#494949"/><rect x="29.5" y="10.5" width="4.5" height="1.8" fill="#494949"/><rect x="29.5" y="14.5" width="4.5" height="1.8" fill="#494949"/></svg>
<svg style="left:724px;top:168px" width="27" height="26" viewBox="0 0 27 26"><g fill="none" stroke="#606060" stroke-width="2"><rect x="1" y="1" width="10.5" height="10.5"/><rect x="15.5" y="1" width="10.5" height="10.5"/><rect x="1" y="14.5" width="10.5" height="10.5"/><rect x="15.5" y="14.5" width="10.5" height="10.5"/></g><path d="M11.5 6.3 H15.5 M20.8 11.5 V15.5 M6.3 19.8 H11.5" stroke="#606060" stroke-width="2"/></svg>
<div class="a" style="left:768px;top:170px;width:1.5px;height:22px;background:#d8d8d8"></div>
<svg style="left:785px;top:167px" width="18" height="28" viewBox="0 0 18 28"><path d="M16 1.5 L2.5 14 L16 26.5" fill="none" stroke="#555" stroke-width="2.4" stroke-linecap="round" stroke-linejoin="round"/></svg>
<svg style="left:825px;top:167px" width="18" height="28" viewBox="0 0 18 28"><path d="M2 1.5 L15.5 14 L2 26.5" fill="none" stroke="#a8a8a8" stroke-width="2.4" stroke-linecap="round" stroke-linejoin="round"/></svg>
<div class="t" style="left:910.3px;top:159.0px;font-size:23px;color:#7b10e0;font-weight:normal;">C</div>
<div class="t" style="left:940.3px;top:158.7px;font-size:24px;color:#0b64f5;font-weight:normal;font-style:italic">idle</div>
<svg style="left:2329px;top:168px" width="26" height="27" viewBox="0 0 26 27"><path d="M1.5 8.5 H23.5 M17 2 L23.5 8.5 L17 15 M24.5 18.5 H2.5 M9 12 L2.5 18.5 L9 25" fill="none" stroke="#555" stroke-width="2" stroke-linejoin="miter"/></svg>
<svg style="left:2376px;top:168px" width="37" height="26" viewBox="0 0 37 26"><path d="M0 1 H11.5 M0 7 H16 M0 13 H11.5 M0 19 H16 M0 25 H16" stroke="#555" stroke-width="2"/><rect x="21.5" y="1" width="14" height="24" fill="none" stroke="#555" stroke-width="2"/><rect x="25" y="4.5" width="7" height="17" fill="none" stroke="#555" stroke-width="2"/></svg>
<div class="a" style="left:2430.5px;top:170px;width:1.5px;height:22px;background:#d8d8d8"></div>
<svg style="left:2450px;top:168px" width="27" height="26" viewBox="0 0 27 26"><rect x="1" y="1" width="25" height="24" rx="4" fill="none" stroke="#555" stroke-width="2"/><path d="M1 9 H26 M13.5 12.5 V21.5 M9 17 H18" stroke="#555" stroke-width="2"/></svg>
<svg style="left:723px;top:223.5px" width="26" height="26" viewBox="0 0 30 30"><rect x="0.5" y="0.5" width="29" height="29" rx="6.5" fill="#1b6af6"/><rect x="2.6" y="2.6" width="24.8" height="24.8" rx="4.5" fill="none" stroke="#fff" stroke-width="1.1" opacity="0.9"/><path d="M13.2 6 L19.8 19.5 M16.5 6 L9.6 20 M7.2 16.2 H22.8 M9 21.5 L8 23 M20.5 20.2 L21.8 22.5" stroke="#fff" stroke-width="2" stroke-linecap="round"/></svg>
<div class="t" style="left:758.3px;top:215.5px;font-size:23.5px;color:#1f1f1f;font-weight:normal;">Linux</div>
<svg style="left:825px;top:227px" width="10" height="20" viewBox="0 0 10 20"><path d="M1.5 1.5 L8 10 L1.5 18.5" fill="none" stroke="#6e6e6e" stroke-width="1.9"/></svg>
<svg style="left:851.5px;top:226px" width="26" height="22" viewBox="0 0 26 22"><path d="M0 3 Q0 0.5 2.5 0.5 H9 L11.5 3 H23.5 Q26 3 26 5.5 V19 Q26 21.5 23.5 21.5 H2.5 Q0 21.5 0 19 Z" fill="#7f8182"/><path d="M0 6.5 H26" stroke="#a5a7a8" stroke-width="1"/></svg>
<div class="t" style="left:886.3px;top:215.5px;font-size:23.5px;color:#1f1f1f;font-weight:normal;">arch</div>
<svg style="left:943px;top:227px" width="10" height="20" viewBox="0 0 10 20"><path d="M1.5 1.5 L8 10 L1.5 18.5" fill="none" stroke="#6e6e6e" stroke-width="1.9"/></svg>
<svg style="left:969.5px;top:226px" width="26" height="22" viewBox="0 0 26 22"><path d="M0 3 Q0 0.5 2.5 0.5 H9 L11.5 3 H23.5 Q26 3 26 5.5 V19 Q26 21.5 23.5 21.5 H2.5 Q0 21.5 0 19 Z" fill="#7f8182"/><path d="M0 6.5 H26" stroke="#a5a7a8" stroke-width="1"/></svg>
<div class="t" style="left:1004.3px;top:215.5px;font-size:23.5px;color:#1f1f1f;font-weight:normal;">arm64</div>
<svg style="left:1084px;top:227px" width="10" height="20" viewBox="0 0 10 20"><path d="M1.5 1.5 L8 10 L1.5 18.5" fill="none" stroke="#6e6e6e" stroke-width="1.9"/></svg>
<svg style="left:1111px;top:226px" width="26" height="22" viewBox="0 0 26 22"><path d="M0 3 Q0 0.5 2.5 0.5 H9 L11.5 3 H23.5 Q26 3 26 5.5 V19 Q26 21.5 23.5 21.5 H2.5 Q0 21.5 0 19 Z" fill="#7f8182"/><path d="M0 6.5 H26" stroke="#a5a7a8" stroke-width="1"/></svg>
<div class="t" style="left:1146.3px;top:215.5px;font-size:23.5px;color:#1f1f1f;font-weight:normal;">kernel</div>
<svg style="left:1223px;top:227px" width="10" height="20" viewBox="0 0 10 20"><path d="M1.5 1.5 L8 10 L1.5 18.5" fill="none" stroke="#6e6e6e" stroke-width="1.9"/></svg>
<div class="t" style="left:1252.8px;top:215.5px;font-size:23px;color:#7b10e0;font-weight:normal;">C</div>
<div class="t" style="left:1284.3px;top:215.5px;font-size:23.5px;color:#1f1f1f;font-weight:normal;">idle</div>
<svg style="left:1332px;top:227px" width="10" height="20" viewBox="0 0 10 20"><path d="M1.5 1.5 L8 10 L1.5 18.5" fill="none" stroke="#6e6e6e" stroke-width="1.9"/></svg>
<div class="t" style="left:1353.8px;top:215.5px;font-size:23.5px;color:#1f1f1f;font-weight:normal;">No Selection</div>
<svg style="left:2403px;top:226px" width="16" height="23" viewBox="0 0 16 23"><path d="M14 1.5 L2.5 11.5 L14 21.5" fill="none" stroke="#555" stroke-width="2.2" stroke-linejoin="round"/></svg>
<svg style="left:2429.5px;top:226px" width="22" height="21" viewBox="0 0 22 21"><path d="M11 0.8 Q12 0.8 12.6 1.8 L21.4 17.8 Q22.2 20.5 19.5 20.5 H2.5 Q-0.2 20.5 0.6 17.8 L9.4 1.8 Q10 0.8 11 0.8 Z" fill="#f9a80b"/><path d="M11 6 V12.8" stroke="#fff" stroke-width="2.6" stroke-linecap="round"/><circle cx="11" cy="16.3" r="1.5" fill="#fff"/></svg>
<svg style="left:2461px;top:226px" width="16" height="23" viewBox="0 0 16 23"><path d="M2 1.5 L13.5 11.5 L2 21.5" fill="none" stroke="#555" stroke-width="2.2" stroke-linejoin="round"/></svg>
<svg style="left:729px;top:1014px" width="30" height="18" viewBox="0 0 30 18"><path d="M3 0 H23 Q24.5 0 25.5 1.3 L29.5 8 Q30 9 29.5 10 L25.5 16.7 Q24.5 18 23 18 H3 Q0 18 0 15 V3 Q0 0 3 0 Z" fill="#1463ff"/></svg>
<div class="a" style="left:774.5px;top:1011px;width:1.5px;height:23.5px;background:#dadada"></div>
<div class="a" style="left:868.5px;top:1011px;width:1.5px;height:23.5px;background:#dadada"></div>
<div class="a" style="left:1110.5px;top:1011px;width:1.5px;height:23.5px;background:#dadada"></div>
<div class="a" style="left:1292.5px;top:1011px;width:1.5px;height:23.5px;background:#dadada"></div>
<div class="a" style="left:784px;top:1005px;width:76px;height:35.5px;border-radius:18px;background:#e3e3e3"></div>
<div class="t" style="left:802.3px;top:1001.5px;font-size:23px;color:#5a5a5a;font-weight:normal;">Vim</div>
<svg style="left:884px;top:1011px" width="31" height="24" viewBox="0 0 31 24"><rect x="1" y="1" width="7.5" height="22" fill="none" stroke="#666666" stroke-width="2"/><path d="M13.5 1.5 L29.5 12 L13.5 22.5 Z" fill="none" stroke="#666666" stroke-width="2" stroke-linejoin="round"/></svg>
<svg style="left:946px;top:1012px" width="28" height="25" viewBox="0 0 28 25"><path d="M1.5 13.5 L13 2.5 L23 12 M26.5 9.5 V16 H20" fill="none" stroke="#666666" stroke-width="2"/><rect x="5.5" y="18.5" width="16" height="5" fill="none" stroke="#666666" stroke-width="2"/></svg>
<svg style="left:1011px;top:1009px" width="19" height="28" viewBox="0 0 19 28"><path d="M9.5 1 V17.5 M2.5 11.5 L9.5 18.5 L16.5 11.5" fill="none" stroke="#666666" stroke-width="2"/><rect x="1" y="21.5" width="17" height="5.5" fill="none" stroke="#666666" stroke-width="2"/></svg>
<svg style="left:1071px;top:1009px" width="19" height="28" viewBox="0 0 19 28"><path d="M9.5 19 V2.5 M2.5 8.5 L9.5 1.5 L16.5 8.5" fill="none" stroke="#666666" stroke-width="2"/><rect x="1" y="21.5" width="17" height="5.5" fill="none" stroke="#666666" stroke-width="2"/></svg>
<svg style="left:1130px;top:1010px" width="26" height="26" viewBox="0 0 26 26"><g fill="none" stroke="#666666" stroke-width="2"><rect x="1" y="1" width="24" height="6.2" rx="2"/><rect x="1" y="9.4" width="24" height="6.2" rx="2"/><rect x="1" y="17.8" width="24" height="6.2" rx="2"/></g></svg>
<svg style="left:1188px;top:1009px" width="28" height="28" viewBox="0 0 28 28"><g fill="none" stroke="#666666" stroke-width="2"><circle cx="5.8" cy="6" r="4.3"/><circle cx="22" cy="14" r="4.3"/><circle cx="5.8" cy="22.2" r="4.3"/><path d="M9.6 8 L18.2 12 M9.6 20.2 L18.2 16"/></g></svg>
<svg style="left:1249px;top:1010px" width="27" height="26" viewBox="0 0 27 26"><path d="M1.5 10.5 L25.5 1.5 L15.5 24.5 L14 12.5 Z" fill="none" stroke="#666666" stroke-width="2" stroke-linejoin="round"/></svg>
<svg style="left:1311px;top:1012px" width="26" height="20" viewBox="0 0 30 24"><rect width="30" height="24" rx="5" fill="#111"/><path d="M5.2 5 L11 8.5 L5.2 12" fill="none" stroke="#fff" stroke-width="1.7" stroke-linejoin="miter"/><rect x="11.5" y="11.6" width="6.5" height="1.8" fill="#fff"/></svg>
<div class="t" style="left:1346.8px;top:1001.5px;font-size:23.5px;color:#222;font-weight:normal;">Kernel</div>
<svg style="left:1424px;top:1013px" width="10" height="20" viewBox="0 0 10 20"><path d="M1.5 1.5 L8 10 L1.5 18.5" fill="none" stroke="#777" stroke-width="1.9"/></svg>
<svg style="left:1448px;top:1007px" width="32" height="32" viewBox="0 0 32 32"><circle cx="16" cy="16" r="15.5" fill="#1b63f5"/><rect x="10.8" y="8.5" width="2.2" height="15" fill="#fff"/><rect x="14.9" y="6.5" width="2.2" height="19" fill="#fff"/><rect x="19" y="8.5" width="2.2" height="15" fill="#fff"/></svg>
<div class="t" style="left:1487.8px;top:1001.5px;font-size:23.5px;color:#222;font-weight:normal;">Thread 1</div>
<svg style="left:1589px;top:1013px" width="10" height="20" viewBox="0 0 10 20"><path d="M1.5 1.5 L8 10 L1.5 18.5" fill="none" stroke="#777" stroke-width="1.9"/></svg>
<svg style="left:1612px;top:1007px" width="32" height="32" viewBox="0 0 32 32"><rect x="0" y="0" width="32" height="32" rx="7" fill="#a6733a"/><path d="M12.40 7.75 L13.22 4.12 L18.78 4.12 L19.60 7.75 L19.29 7.62 L22.44 5.64 L26.36 9.56 L24.38 12.71 L24.25 12.40 L27.88 13.22 L27.88 18.78 L24.25 19.60 L24.38 19.29 L26.36 22.44 L22.44 26.36 L19.29 24.38 L19.60 24.25 L18.78 27.88 L13.22 27.88 L12.40 24.25 L12.71 24.38 L9.56 26.36 L5.64 22.44 L7.62 19.29 L7.75 19.60 L4.12 18.78 L4.12 13.22 L7.75 12.40 L7.62 12.71 L5.64 9.56 L9.56 5.64 L12.71 7.62 Z M20.20 16.00 A4.2 4.2 0 1 0 11.80 16.00 A4.2 4.2 0 1 0 20.20 16.00 Z" fill="#ffffff" fill-rule="evenodd"/></svg>
<div class="t" style="left:1650.8px;top:1001.5px;font-size:23.5px;color:#222;font-weight:normal;">0 cpu_do_idle</div>
<div class="t" style="left:2259.3px;top:1001.5px;font-size:23.5px;color:#6a6a6a;font-weight:normal;">Line: 1</div>
<div class="t" style="left:2343.8px;top:1001.5px;font-size:23.5px;color:#6a6a6a;font-weight:normal;">Col: 1</div>
<div class="a" style="left:2424.5px;top:1011px;width:1.5px;height:23.5px;background:#dadada"></div>
<svg style="left:2443px;top:1010px" width="26" height="26" viewBox="0 0 26 26"><rect x="1.2" y="1.2" width="23.6" height="23.6" rx="4.5" fill="none" stroke="#666666" stroke-width="2.2"/><rect x="4.5" y="16" width="17" height="5.5" rx="2" fill="#666666"/></svg>
<svg style="left:733.5px;top:1076px" width="17" height="10" viewBox="0 0 16 10"><path d="M1.5 1.5 L8 8 L14.5 1.5" fill="none" stroke="#555" stroke-width="2.8" stroke-linecap="round" stroke-linejoin="round"/></svg>
<div class="a" style="left:762px;top:1064px;width:32px;height:31.5px;border-radius:6px;background:#2fb63b"></div>
<div class="t" style="left:768.3px;top:1059.0px;font-size:22px;color:#fff;font-weight:bold;">L</div>
<div class="t" style="left:799.3px;top:1059.0px;font-size:24px;color:#1b1b1b;font-weight:bold;">context</div>
<div class="t" style="left:890.3px;top:1059.0px;font-size:22.2px;color:#333;font-weight:normal;">(arm_cpuidle_irq_context)</div>
<div class="t m" style="left:1604px;top:1054px;font-size:25.6px;color:#111;-webkit-text-stroke:0.3px #111">User Command: target create</div>
<div class="t m" style="left:1604px;top:1093.5px;font-size:25.6px;color:#111;-webkit-text-stroke:0.3px #111">/Volumes/Work/linux-6.7.9/vmlinux</div>
<div class="t m" style="left:1604px;top:1133px;font-size:25.6px;color:#111;-webkit-text-stroke:0.3px #111">User Command: gdb-remote localhost:1234</div>
<div class="t m" style="left:1605px;top:1511px;font-size:25.6px;color:#2a8a22;-webkit-text-stroke:0.3px #2a8a22">(lldb)</div>
<div class="t" style="left:720.3px;top:1567.0px;font-size:23.5px;color:#1e1e1e;font-weight:normal;">Local</div>
<svg style="left:783px;top:1578px" width="13" height="21" viewBox="0 0 13 21"><path d="M1.8 7.5 L6.5 2.5 L11.2 7.5 M1.8 13.5 L6.5 18.5 L11.2 13.5" fill="none" stroke="#333" stroke-width="2.2" stroke-linejoin="round" stroke-linecap="round"/></svg>
<div class="a" style="left:822.5px;top:1578px;width:1.5px;height:23px;background:#d6d6d6"></div>
<svg style="left:842.5px;top:1578.5px" width="30" height="20" viewBox="0 0 30 20"><path d="M1.5 10 Q15 -4 28.5 10 Q15 24 1.5 10 Z" fill="none" stroke="#a9a9a9" stroke-width="2"/><circle cx="15" cy="10" r="5.4" fill="#a9a9a9"/><circle cx="15" cy="10" r="2" fill="#fff"/></svg>
<svg style="left:898px;top:1576px" width="26" height="26" viewBox="0 0 26 26"><circle cx="13" cy="13" r="12" fill="none" stroke="#a9a9a9" stroke-width="2"/><circle cx="13" cy="7.8" r="1.5" fill="#a9a9a9"/><path d="M10.5 11.5 H13.5 V19.5 M10 19.5 H16.5" fill="none" stroke="#a9a9a9" stroke-width="2"/></svg>
<div class="a" style="left:1236.5px;top:1566.5px;width:342px;height:40.5px;border-radius:12px;background:#ececec;border:1.5px solid #d3d3d3"></div>
<svg style="left:1245.5px;top:1575.5px" width="27" height="27" viewBox="0 0 27 27"><circle cx="13.5" cy="13.5" r="12" fill="none" stroke="#555" stroke-width="2"/><path d="M7 10 H20 M9.3 13.8 H17.7 M11.5 17.5 H15.5" stroke="#555" stroke-width="2"/></svg>
<div class="t" style="left:1279.3px;top:1567.0px;font-size:23.5px;color:#b4b4b4;font-weight:normal;">Filter</div>
<svg style="left:1611px;top:1578.5px" width="30" height="20" viewBox="0 0 30 20"><path d="M1.5 10 Q15 -4 28.5 10 Q15 24 1.5 10 Z" fill="none" stroke="#a9a9a9" stroke-width="2"/><circle cx="15" cy="10" r="5.4" fill="#a9a9a9"/><circle cx="15" cy="10" r="2" fill="#fff"/></svg>
<svg style="left:1659px;top:1575px" width="24" height="28" viewBox="0 0 24 28"><rect x="0" y="0" width="24" height="12.5" rx="6.25" fill="#0a5cff"/><rect x="0" y="15" width="24" height="12.5" rx="6.25" fill="#0a5cff"/><circle cx="6.5" cy="6.25" r="3.5" fill="#fff"/><circle cx="17.5" cy="21.25" r="3.5" fill="#fff"/></svg>
<div class="a" style="left:1980.5px;top:1567.5px;width:343px;height:40.5px;border-radius:12px;background:#ececec;border:1.5px solid #d3d3d3"></div>
<svg style="left:1989.5px;top:1575px" width="52" height="28" viewBox="0 0 52 28"><rect x="1" y="1" width="50" height="26" rx="13" fill="none" stroke="#555" stroke-width="2"/><path d="M9 9.5 H24 M11.5 14 H21.5 M14 18.5 H19 M32 11.5 L37 16.5 L42 11.5" fill="none" stroke="#555" stroke-width="2"/></svg>
<div class="t" style="left:2047.3px;top:1567.0px;font-size:23.5px;color:#b4b4b4;font-weight:normal;">Filter</div>
<svg style="left:2345px;top:1576px" width="23" height="27" viewBox="0 0 23 27"><path d="M1 5 H22 M8 4.5 V2 Q8 1 9 1 H14 Q15 1 15 2 V4.5 M3.5 5.5 L5 25 Q5.1 26 6 26 H17 Q17.9 26 18 25 L19.5 5.5 M8.5 9 V22 M11.5 9 V22 M14.5 9 V22" fill="none" stroke="#777" stroke-width="1.9"/></svg>
<div class="a" style="left:2388px;top:1578px;width:1.5px;height:23px;background:#d6d6d6"></div>
<svg style="left:2406.5px;top:1575.5px" width="27" height="25" viewBox="0 0 27 25"><rect x="1.2" y="1.2" width="24.6" height="22.6" rx="4" fill="none" stroke="#1d63f5" stroke-width="2.4"/><rect x="5" y="5" width="4" height="15" rx="1" fill="#1d63f5"/></svg>
<svg style="left:2449px;top:1575.5px" width="27" height="25" viewBox="0 0 27 25"><rect x="1.2" y="1.2" width="24.6" height="22.6" rx="4" fill="none" stroke="#1d63f5" stroke-width="2.4"/><rect x="18" y="5" width="4" height="15" rx="1" fill="#1d63f5"/></svg>
</div>
</body></html>
